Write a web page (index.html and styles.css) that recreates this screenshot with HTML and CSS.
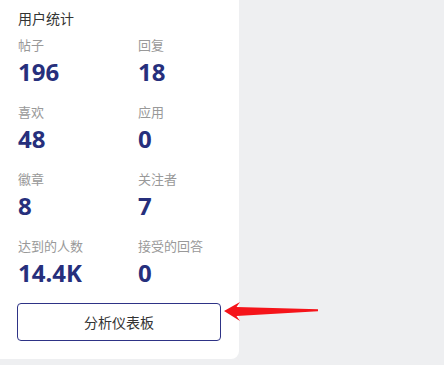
FILE: index.html
```html
<!DOCTYPE html>
<html lang="zh">
<head>
<meta charset="utf-8">
<link rel="stylesheet" href="styles.css">
</head>
<body>
<div class="page">
  <section class="card">
    <h2 class="title">用户统计</h2>
    <div class="stats">
      <div class="stat"><div class="label">帖子</div><div class="value">196</div></div>
      <div class="stat"><div class="label">回复</div><div class="value">18</div></div>
      <div class="stat"><div class="label">喜欢</div><div class="value">48</div></div>
      <div class="stat"><div class="label">应用</div><div class="value">0</div></div>
      <div class="stat"><div class="label">徽章</div><div class="value">8</div></div>
      <div class="stat"><div class="label">关注者</div><div class="value">7</div></div>
      <div class="stat"><div class="label">达到的人数</div><div class="value">14.4K</div></div>
      <div class="stat"><div class="label">接受的回答</div><div class="value">0</div></div>
    </div>
    <button class="btn">分析仪表板</button>
  </section>
  <svg class="arrow" width="100" height="24" viewBox="0 0 100 24">
    <polygon points="0,10 16,1 12.5,6 94,8.3 94,10.2 12.5,15 16,20" fill="#f5141a"/>
  </svg>
</div>
</body>
</html>
```

FILE: styles.css
```css
html, body {
  margin: 0;
  padding: 0;
  background: #eeeff1;
}
body {
  font-family: "Noto Sans", "Noto Sans CJK SC", sans-serif;
  width: 444px;
  height: 365px;
  overflow: hidden;
}
.page {
  position: relative;
  height: 365px;
}
.card {
  width: 239px;
  box-sizing: border-box;
  background: #fff;
  border-radius: 0 0 8px 0;
  padding: 9px 18px 18px 17px;
}
.title {
  margin: 0;
  font-size: 14px;
  line-height: 20px;
  font-weight: 400;
  color: #333;
  padding-left: 1px;
}
.stats {
  display: grid;
  grid-template-columns: 120px 1fr;
  row-gap: 16px;
  margin-top: 7px;
}
.label {
  font-size: 13px;
  line-height: 18px;
  color: #999;
  padding-left: 1px;
}
.value {
  margin-top: 3px;
  font-size: 24px;
  line-height: 30px;
  font-weight: 700;
  color: #262f7c;
  padding-left: 1px;
}
.btn {
  display: block;
  width: 204px;
  height: 38px;
  margin-top: 15px;
  box-sizing: border-box;
  background: #fff;
  border: 1px solid #2e3386;
  border-radius: 4px;
  font-family: "Noto Sans", "Noto Sans CJK SC", sans-serif;
  font-size: 14px;
  color: #333;
  padding: 0;
}
.arrow {
  position: absolute;
  left: 224px;
  top: 301px;
}
```
